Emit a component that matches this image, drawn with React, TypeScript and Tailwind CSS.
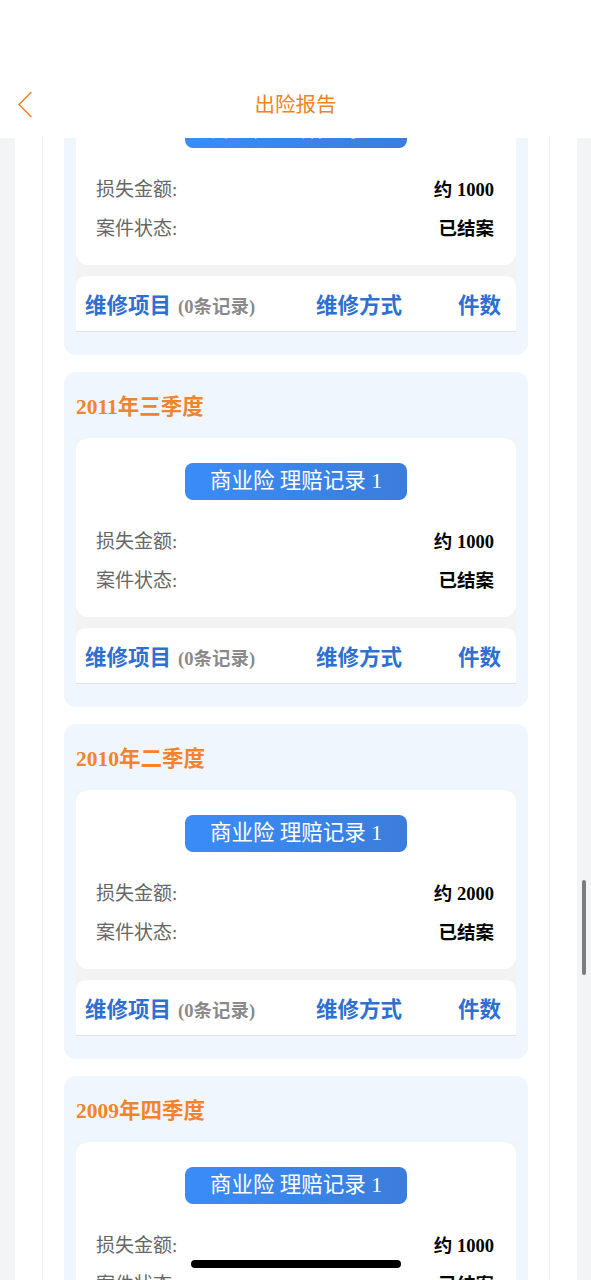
const records = [
  { quarter: "2012年一季度", loss: "1000", status: "已结案" },
  { quarter: "2011年三季度", loss: "1000", status: "已结案" },
  { quarter: "2010年二季度", loss: "2000", status: "已结案" },
  { quarter: "2009年四季度", loss: "1000", status: "已结案" },
];

function QuarterPanel({ quarter, loss, status }: { quarter: string; loss: string; status: string }) {
  return (
    <div className="h-[335px] rounded-xl bg-[#f0f6fe] px-3 pt-[21px]">
      {/* Quarter title */}
      <div className="h-[28px] text-[21.5px] font-bold leading-[28px] text-[#f5832b]">{quarter}</div>

      <div className="mt-[17px] bg-[#f3f3f3]">
        {/* Claim card */}
        <div className="h-[179px] rounded-xl bg-white pt-[25px]">
          <div className="mx-auto flex h-[37px] w-[222px] items-center justify-center rounded-lg bg-gradient-to-r from-[#3a8cf7] to-[#3b7ddc] text-[21.5px] text-white">
            商业险 理赔记录 1
          </div>
          <div className="mt-[23px] pl-5 pr-[22px]">
            <div className="flex h-[39px] items-center justify-between">
              <span className="text-[19px] text-[#666666]">损失金额:</span>
              <span className="text-[18.5px] font-bold text-black">约 {loss}</span>
            </div>
            <div className="flex h-[39px] items-center justify-between">
              <span className="text-[19px] text-[#666666]">案件状态:</span>
              <span className="text-[18.5px] font-bold text-black">{status}</span>
            </div>
          </div>
        </div>

        {/* Repair header */}
        <div className="mt-[11px] flex h-[56px] items-center rounded-t-[10px] border-b border-[#dfe5ec] bg-white pl-[9px] pr-[15px] pt-[5px] font-bold">
          <div className="flex flex-1 items-baseline">
            <span className="text-[21.5px] text-[#2d6fd2]">维修项目</span>
            <span className="ml-[7px] text-[18.5px] text-[#8a8a8a]">(0条记录)</span>
          </div>
          <span className="mr-[56px] text-[21.5px] text-[#2d6fd2]">维修方式</span>
          <span className="text-[21.5px] text-[#2d6fd2]">件数</span>
        </div>
      </div>
    </div>
  );
}

export default function App() {
  return (
    <div className="relative flex h-[1280px] w-[591px] flex-col overflow-hidden bg-[#f3f4f6] font-['Liberation_Serif','Noto_Sans_CJK_SC',serif]">
      {/* Header */}
      <div className="relative z-10 h-[138px] shrink-0 bg-white pt-[81px]">
        <div className="relative flex h-[44px] items-center justify-center">
          <svg className="absolute left-[17px] top-[10px]" width="16" height="27" viewBox="0 0 16 27" fill="none">
            <path d="M14 1.5 L2 13.5 L14 25.5" stroke="#f0852c" strokeWidth="1.6" strokeLinecap="round" strokeLinejoin="round" />
          </svg>
          <span className="font-['Noto_Sans_CJK_SC',sans-serif] text-[20.5px] text-[#f0822a]">出险报告</span>
        </div>
      </div>

      {/* Scrolled content */}
      <div className="flex-1 overflow-hidden px-[15px] pr-[14px]">
        <div className="-mt-[134px] h-[1400px] bg-white px-[27px]">
          <div className="h-full border-x border-[#f1f1f1] px-[21px] pt-[16px]">
            <div className="flex flex-col gap-[17px]">
              {records.map((r) => (
                <QuarterPanel key={r.quarter} {...r} />
              ))}
            </div>
          </div>
        </div>
      </div>

      {/* Scrollbar */}
      <div className="absolute left-[582px] top-[880px] h-[95px] w-[4px] rounded-full bg-[#7d7d7d]" />
      {/* Home indicator */}
      <div className="absolute bottom-[12px] left-[191px] h-[8px] w-[210px] rounded-full bg-black" />
    </div>
  );
}
